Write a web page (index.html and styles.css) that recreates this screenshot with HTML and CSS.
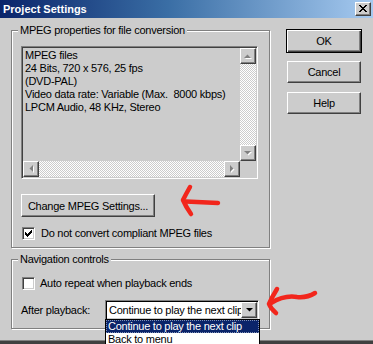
FILE: index.html
```html
<!DOCTYPE html>
<html lang="en">
<head>
  <meta charset="UTF-8">
  <title>Project Settings</title>
  <link rel="stylesheet" href="styles.css">
</head>
<body>

<div class="window">
  <div class="titlebar">
    <span class="title">Project Settings</span>
    <button class="close" aria-label="Close">
      <svg width="8" height="7" viewBox="0 0 8 7"><path d="M0 0h2v1h1v1h2V1h1V0h2v1H7v1H6v1H5v1h1v1h1v1h1v1H6V6H5V5H3v1H2v1H0V6h1V5h1V4h1V3H2V2H1V1H0z"/></svg>
    </button>
  </div>

  <div class="main">
    <div class="left">
      <div class="group group-mpeg">
        <div class="group-title">MPEG properties for file conversion</div>
        <div class="listbox">
          <div class="listbox-text">MPEG files<br>24 Bits, 720 x 576, 25 fps<br>(DVD-PAL)<br>Video data rate: Variable (Max.&nbsp; 8000 kbps)<br>LPCM Audio, 48 KHz, Stereo</div>
          <div class="vscroll">
            <span class="sb-btn"><svg width="8" height="5" viewBox="0 0 8 5"><path class="hl" d="M1 5h7L4.5 1.5z"/><path class="sh" d="M0 4h7L3.5 0.5z"/></svg></span>
            <span class="track"></span>
            <span class="sb-btn"><svg width="8" height="5" viewBox="0 0 8 5"><path class="hl" d="M1 1h7L4.5 4.5z"/><path class="sh" d="M0 0h7L3.5 3.5z"/></svg></span>
          </div>
          <div class="hscroll">
            <span class="sb-btn"><svg width="5" height="8" viewBox="0 0 5 8"><path class="hl" d="M5 1v7L1.5 4.5z"/><path class="sh" d="M4 0v7L0.5 3.5z"/></svg></span>
            <span class="track"></span>
            <span class="sb-btn"><svg width="5" height="8" viewBox="0 0 5 8"><path class="hl" d="M1 1v7l3.5-3.5z"/><path class="sh" d="M0 0v7l3.5-3.5z"/></svg></span>
          </div>
          <div class="corner"></div>
        </div>
        <button class="btn btn-change">Change MPEG Settings...</button>
        <label class="check-row check-mpeg">
          <span class="checkbox"><svg width="7" height="7" viewBox="0 0 7 7"><path d="M0 2h1v3H0zM1 3h1v3H1zM2 4h1v3H2zM3 3h1v3H3zM4 2h1v3H4zM5 1h1v3H5zM6 0h1v3H6z"/></svg></span>
          Do not convert compliant MPEG files
        </label>
      </div>

      <div class="group group-nav">
        <div class="group-title">Navigation controls</div>
        <label class="check-row check-repeat">
          <span class="checkbox"></span>
          Auto repeat when playback ends
        </label>
        <div class="after-row">
          <span class="after-label">After playback:</span>
          <div class="combo">
            <span class="combo-value">Continue to play the next clip</span>
            <span class="combo-btn"><svg width="7" height="4" viewBox="0 0 7 4"><path d="M0 0h7L3.5 3.5z"/></svg></span>
            <ul class="combo-list">
              <li class="selected">Continue to play the next clip</li>
              <li>Back to menu</li>
            </ul>
          </div>
        </div>
      </div>
    </div>

    <div class="actions">
      <button class="btn btn-default">OK</button>
      <button class="btn btn-side">Cancel</button>
      <button class="btn btn-side btn-help">Help</button>
    </div>
  </div>

  <svg class="annotations" width="373" height="344" viewBox="0 0 373 344">
    <path d="M218 203 L186 201.5" />
    <path d="M190 187 Q186 194 183 200 Q186 207 191 214" />
    <path d="M271 303 Q284 295 297 297 Q307 298 315 293" />
    <path d="M277 289 Q272 297 269 304 Q271 309 276 313" />
  </svg>
</div>

</body>
</html>
```

FILE: styles.css
```css
body {
  margin: 0;
  height: 344px;
  overflow: hidden;
  background: #404040;
  font-family: "Liberation Sans", Arial, sans-serif;
  font-size: 11px;
  letter-spacing: -0.25px;
  color: #000;
}
.window {
  position: relative;
  width: 373px;
  height: 340px;
  background: #cccccc;
  border-bottom: 1px solid #808080;
}
.titlebar {
  height: 18px;
  display: flex;
  align-items: center;
  justify-content: space-between;
  padding: 0 2px 0 3px;
  background: linear-gradient(to right, #0a246a, #3a6ea5 45%, #a6caf0);
}
.title {
  color: #fff;
  font-weight: bold;
  font-size: 11px;
  letter-spacing: 0;
}
.close {
  width: 16px;
  height: 14px;
  padding: 0;
  margin-top: -1px;
  display: flex;
  align-items: center;
  justify-content: center;
  background: #cccccc;
  border: 1px solid;
  border-color: #fff #404040 #404040 #fff;
  box-shadow: inset -1px -1px #808080;
}
.main {
  display: flex;
  padding-left: 11px;
}
.left {
  width: 260px;
}
.group {
  width: 259px;
  box-sizing: border-box;
  border: 1px solid #808080;
  box-shadow: 1px 1px 0 #fff, inset 1px 1px 0 #fff;
}
.group-mpeg {
  margin-top: 12px;
  height: 218px;
}
.group-nav {
  margin-top: 11px;
  height: 70px;
}
.group-title {
  display: table;
  margin: -7px 0 0 6px;
  padding: 0 2px;
  line-height: 13px;
  background: #cccccc;
}
.listbox {
  margin: 9px 0 0 9px;
  width: 237px;
  height: 133px;
  box-sizing: border-box;
  border: 1px solid;
  border-color: #808080 #fff #fff #808080;
  padding: 1px 1px 1px 1px;
  box-shadow: inset 1px 1px #404040;
  display: grid;
  grid-template-columns: 1fr 16px;
  grid-template-rows: 1fr 16px;
}
.listbox-text {
  padding: 1px 2px;
  line-height: 13px;
  white-space: nowrap;
  overflow: hidden;
}
.vscroll {
  display: flex;
  flex-direction: column;
}
.hscroll {
  display: flex;
}
.track {
  flex: 1;
  background-image: conic-gradient(#fff 25%, #cccccc 0 50%, #fff 0 75%, #cccccc 0);
  background-size: 2px 2px;
}
.sb-btn {
  width: 16px;
  height: 16px;
  box-sizing: border-box;
  display: flex;
  align-items: center;
  justify-content: center;
  background: #cccccc;
  border: 1px solid;
  border-color: #fff #404040 #404040 #fff;
  box-shadow: inset -1px -1px #808080;
}
.sb-btn .hl {
  fill: #fff;
}
.sb-btn .sh {
  fill: #808080;
}
.btn {
  font-family: inherit;
  font-size: 11px;
  letter-spacing: inherit;
  color: #000;
  padding: 0;
  background: #cccccc;
  border: 1px solid;
  border-color: #fff #404040 #404040 #fff;
  box-shadow: inset -1px -1px #808080;
  display: block;
}
.btn-change {
  margin: 15px 0 0 9px;
  width: 134px;
  height: 23px;
}
.check-row {
  display: flex;
  align-items: center;
  gap: 6px;
  margin-left: 10px;
  line-height: 13px;
}
.check-mpeg {
  margin-top: 10px;
}
.check-repeat {
  margin-top: 11px;
  gap: 5px;
}
.checkbox {
  width: 13px;
  height: 13px;
  box-sizing: border-box;
  display: flex;
  align-items: center;
  justify-content: center;
  background: #fff;
  border: 1px solid;
  border-color: #808080 #fff #fff #808080;
  box-shadow: inset 1px 1px #404040, inset -1px -1px #cccccc;
}
.after-row {
  display: flex;
  align-items: center;
  margin-top: 10px;
}
.after-label {
  width: 84px;
  margin-left: 9px;
}
.combo {
  position: relative;
  width: 154px;
  height: 20px;
  box-sizing: border-box;
  display: flex;
  padding: 1px;
  background: #fff;
  border: 1px solid;
  border-color: #808080 #fff #fff #808080;
  box-shadow: inset 1px 1px #000, inset -1px -1px #cccccc;
}
.combo-value {
  flex: 1;
  overflow: hidden;
  white-space: nowrap;
  padding-left: 2px;
  line-height: 16px;
}
.combo-btn {
  width: 16px;
  height: 16px;
  box-sizing: border-box;
  display: flex;
  align-items: center;
  justify-content: center;
  background: #cccccc;
  border: 1px solid;
  border-color: #fff #404040 #404040 #fff;
  box-shadow: inset -1px -1px #808080;
}
.combo-list {
  position: absolute;
  top: 100%;
  left: -1px;
  width: 155px;
  box-sizing: border-box;
  margin: 0;
  padding: 0;
  list-style: none;
  background: #fff;
  border: 1px solid #000;
}
.combo-list li {
  line-height: 13px;
  padding-left: 2px;
  white-space: nowrap;
}
.combo-list .selected {
  background: #0a246a;
  color: #fff;
  outline: 1px dotted #7f8fb5;
  outline-offset: -1px;
}
.actions {
  margin-left: 15px;
  padding-top: 11px;
}
.btn-default {
  width: 76px;
  height: 24px;
  border: 1px solid #000;
  box-shadow: inset 1px 1px #fff, inset -1px -1px #404040, inset -2px -2px #808080;
}
.btn-side {
  width: 74px;
  height: 22px;
  margin: 8px 0 0 1px;
}
.btn-help {
  margin-top: 9px;
}
.annotations {
  position: absolute;
  top: 0;
  left: 0;
  pointer-events: none;
}
.annotations path {
  fill: none;
  stroke: #f2261c;
  stroke-width: 4.5;
  stroke-linecap: round;
  stroke-linejoin: round;
}
```
